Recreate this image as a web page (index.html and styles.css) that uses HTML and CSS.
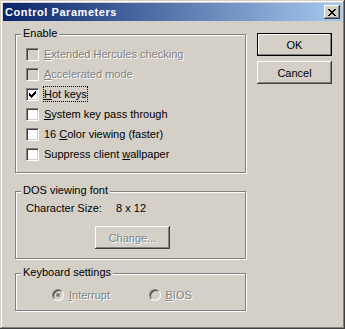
FILE: index.html
```html
<!DOCTYPE html>
<html lang="en">
<head>
    <meta charset="UTF-8">
    <title>Control Parameters</title>
    <link rel="stylesheet" href="styles.css">
</head>
<body>
    <div class="window">
        <div class="titlebar">
            <span class="title">Control Parameters</span>
            <span class="close-btn">
                <svg width="8" height="7" viewBox="0 0 8 7" shape-rendering="crispEdges">
                    <path d="M0 0h2v1h-2z M6 0h2v1h-2z M1 1h2v1h-2z M5 1h2v1h-2z M2 2h4v1h-4z M3 3h2v1h-2z M2 4h4v1h-4z M1 5h2v1h-2z M5 5h2v1h-2z M0 6h2v1h-2z M6 6h2v1h-2z" fill="#000"/>
                </svg>
            </span>
        </div>

        <div class="dialog-body">
            <div class="groups">
                <!-- Enable options -->
                <div class="group group-enable">
                    <span class="group-label">Enable</span>
                    <div class="check-list">
                        <div class="check disabled"><span class="box"></span><span class="check-text"><u>E</u>xtended Hercules checking</span></div>
                        <div class="check disabled"><span class="box"></span><span class="check-text"><u>A</u>ccelerated mode</span></div>
                        <div class="check"><span class="box">
                            <svg width="7" height="7" viewBox="0 0 7 7" shape-rendering="crispEdges">
                                <path d="M0 2h1v3h-1z M1 3h1v3h-1z M2 4h1v3h-1z M3 3h1v3h-1z M4 2h1v3h-1z M5 1h1v3h-1z M6 0h1v3h-1z" fill="#000"/>
                            </svg>
                        </span><span class="check-text focused"><u>H</u>ot keys</span></div>
                        <div class="check"><span class="box"></span><span class="check-text"><u>S</u>ystem key pass through</span></div>
                        <div class="check"><span class="box"></span><span class="check-text">16 <u>C</u>olor viewing (faster)</span></div>
                        <div class="check"><span class="box"></span><span class="check-text">Suppress client <u>w</u>allpaper</span></div>
                    </div>
                </div>

                <!-- DOS font -->
                <div class="group group-font">
                    <span class="group-label">DOS viewing font</span>
                    <div class="font-row">
                        <span class="size-label">Character Size:</span>
                        <span>8 x 12</span>
                    </div>
                    <button class="btn btn-disabled btn-change">Chan<u>g</u>e...</button>
                </div>

                <!-- Keyboard -->
                <div class="group group-keys">
                    <span class="group-label">Keyboard settings</span>
                    <div class="radio-row">
                        <div class="radio disabled"><span class="dot checked"></span><span class="check-text"><u>I</u>nterrupt</span></div>
                        <div class="radio disabled"><span class="dot"></span><span class="check-text"><u>B</u>IOS</span></div>
                    </div>
                </div>
            </div>

            <div class="actions">
                <button class="btn btn-default">OK</button>
                <button class="btn">Cancel</button>
            </div>
        </div>
    </div>
</body>
</html>
```

FILE: styles.css
```css
body {
    margin: 0;
    background: #d4d0c8;
    font-family: "Liberation Sans", Arial, sans-serif;
    font-size: 11px;
    color: #000;
}

.window {
    width: 345px;
    height: 329px;
    box-sizing: border-box;
    padding: 3px;
    background: #d4d0c8;
    box-shadow: inset -1px -1px #404040, inset 1px 1px #d4d0c8, inset -2px -2px #808080, inset 2px 2px #fff;
}

.titlebar {
    height: 18px;
    display: flex;
    align-items: center;
    padding-left: 2px;
    background: linear-gradient(to right, #0a246a, #a6caf0);
}

.title {
    color: #fff;
    font-weight: bold;
    font-size: 11px;
    letter-spacing: 0.55px;
}

.close-btn {
    margin-left: auto;
    margin-right: 2px;
    width: 16px;
    height: 14px;
    box-sizing: border-box;
    display: flex;
    align-items: center;
    justify-content: center;
    padding-top: 1px;
    background: #d4d0c8;
    box-shadow: inset -1px -1px #404040, inset 1px 1px #fff, inset -2px -2px #808080, inset 2px 2px #d4d0c8;
}

.dialog-body {
    display: flex;
    padding: 12px 0 0 12px;
}

.groups {
    padding-top: 1px;
    width: 231px;
}

.group {
    box-sizing: border-box;
    border: 1px solid #808080;
    box-shadow: inset 1px 1px #fff, 1px 1px #fff;
}

.group-label {
    display: block;
    width: max-content;
    margin: -8px 0 0 5px;
    padding: 0 2px;
    line-height: 13px;
    background: #d4d0c8;
}

.group-enable {
    height: 139px;
}

.check-list {
    padding: 4px 0 0 10px;
}

.check {
    display: flex;
    align-items: center;
    height: 20px;
}

.box {
    width: 13px;
    height: 13px;
    box-sizing: border-box;
    border: 1px solid;
    border-color: #808080 #fff #fff #808080;
    box-shadow: inset 1px 1px #404040, inset -1px -1px #d4d0c8;
    background: #fff;
    display: flex;
    padding: 2px 0 0 2px;
}

.check-text {
    margin-left: 5px;
    line-height: 14px;
}

.focused {
    outline: 1px dotted #000;
}

.disabled .box {
    background: #d4d0c8;
}

.disabled .check-text {
    color: #808080;
    text-shadow: 1px 1px 0 #fff;
}

.group-font {
    margin-top: 18px;
    height: 68px;
}

.font-row {
    padding: 5px 0 0 10px;
    line-height: 13px;
}

.size-label {
    display: inline-block;
    width: 87px;
}

.btn {
    display: block;
    width: 75px;
    height: 23px;
    padding: 0;
    border: none;
    background: #d4d0c8;
    font-family: inherit;
    font-size: 11px;
    color: #000;
    box-shadow: inset -1px -1px #404040, inset 1px 1px #fff, inset -2px -2px #808080, inset 2px 2px #d4d0c8;
}

.btn-disabled {
    color: #808080;
    text-shadow: 1px 1px 0 #fff;
}

.btn-change {
    margin: 11px 0 0 79px;
}

.btn-default {
    border: 1px solid #000;
    box-shadow: inset -1px -1px #808080, inset 1px 1px #fff;
}

.group-keys {
    margin-top: 14px;
    height: 38px;
}

.radio-row {
    display: flex;
    padding: 9px 0 0 36px;
}

.radio {
    display: flex;
    align-items: center;
    width: 101px;
    height: 14px;
}

.dot {
    width: 12px;
    height: 12px;
    box-sizing: border-box;
    border-radius: 50%;
    border: 1px solid;
    border-color: #808080 #fff #fff #808080;
    box-shadow: inset 1px 1px #404040, inset -1px -1px #d4d0c8;
    background: #d4d0c8;
    display: flex;
    align-items: center;
    justify-content: center;
}

.dot.checked::after {
    content: "";
    width: 4px;
    height: 4px;
    border-radius: 50%;
    background: #808080;
}

.actions {
    margin-left: 11px;
    display: flex;
    flex-direction: column;
    gap: 5px;
}
```
